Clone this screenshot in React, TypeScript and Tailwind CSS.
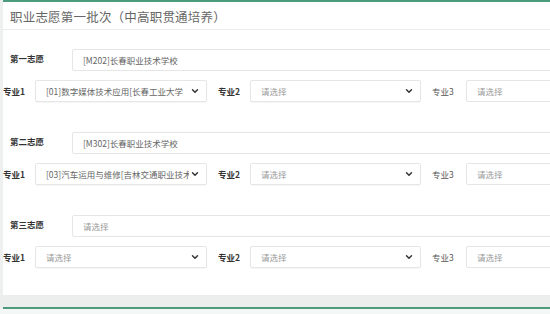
import React from 'react';
import { ChevronDown } from 'lucide-react';

const font = { fontFamily: '"Noto Sans CJK SC", "Noto Sans", sans-serif' };

interface Group {
  label: string;
  school: string;
  major1: string;
}

const groups: Group[] = [
  { label: '第一志愿', school: '[M202]长春职业技术学校', major1: '[01]数字媒体技术应用[长春工业大学' },
  { label: '第二志愿', school: '[M302]长春职业技术学校', major1: '[03]汽车运用与维修[吉林交通职业技术学院' },
  { label: '第三志愿', school: '', major1: '' },
];

const Select: React.FC<{ value: string; width: string }> = ({ value, width }) => (
  <div
    className={`${width} h-[22px] flex items-center border border-[#e6e6e6] rounded-[2px] bg-white pl-[10px] pr-[6px] shadow-[0_1px_1px_rgba(0,0,0,0.04)]`}
  >
    <span
      className={`flex-1 overflow-hidden whitespace-nowrap text-clip text-[8.5px] ${value ? 'text-[#666]' : 'text-[#999]'}`}
    >
      {value || '请选择'}
    </span>
    <ChevronDown size={10} strokeWidth={3.5} className="text-[#333] shrink-0 ml-[1px]" />
  </div>
);

const Label: React.FC<{ text: string; className?: string }> = ({ text, className }) => (
  <span className={`text-[8.5px] font-bold text-[#333] ${className ?? ''}`}>{text}</span>
);

export default function App() {
  return (
    <div className="w-[550px] h-[314px] overflow-hidden bg-[#eef0f0]" style={font}>
      <div className="ml-[3px] bg-white border-t-2 border-[#4d9b7d] h-[295px] w-[600px]">
        <div className="h-[28px] border-b border-[#ececec] flex items-center pl-[7px]">
          <span className="text-[12.5px] text-[#666] mt-[4px] tracking-[0.2px]">职业志愿第一批次（中高职贯通培养）</span>
        </div>
        <div className="flex flex-col pt-[19px]">
          {groups.map((g, i) => (
            <div key={g.label} className={`flex flex-col ${i > 0 ? 'mt-[30px]' : ''}`}>
              <div className="flex items-center h-[22px]">
                <Label text={g.label} className="w-[69px] pl-[7px] -mt-[4px]" />
                <div className="w-[500px] h-[22px] flex items-center border border-[#e6e6e6] rounded-[2px] pl-[10px]">
                  <span className={`text-[8.5px] ${g.school ? 'text-[#666]' : 'text-[#999]'}`}>
                    {g.school || '请选择'}
                  </span>
                </div>
              </div>
              <div className="flex items-center h-[22px] mt-[9px]">
                <Label text="专业1" className="w-[32px]" />
                <Select value={g.major1} width="w-[172px]" />
                <Label text="专业2" className="w-[32px] ml-[11px]" />
                <Select value="" width="w-[171px]" />
                <Label text="专业3" className="w-[34px] ml-[11px] font-normal text-[#555]" />
                <div className="w-[100px] h-[22px] flex items-center border border-[#e6e6e6] rounded-[2px] pl-[10px]">
                  <span className="text-[8.5px] text-[#999]">请选择</span>
                </div>
              </div>
            </div>
          ))}
        </div>
      </div>
      <div className="h-[12px] bg-[#eceeee]" />
      <div className="ml-[3px] h-[2px] bg-[#4d9b7d]" />
      <div className="h-[5px] bg-[#f3f7f5]" />
    </div>
  );
}
